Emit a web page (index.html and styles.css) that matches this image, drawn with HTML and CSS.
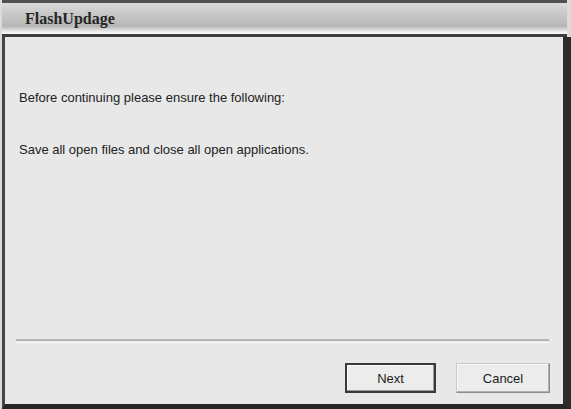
FILE: index.html
```html
<!DOCTYPE html>
<html lang="en">

<head>
  <meta charset="UTF-8">
  <title>FlashUpdage</title>
  <link rel="stylesheet" href="styles.css">
</head>

<body>
  <div class="window">
    <div class="titlebar">
      <span class="titlebar__text">FlashUpdage</span>
    </div>

    <div class="content">
      <div class="content__text">
        <p class="line">Before continuing please ensure the following:</p>
        <p class="line">Save all open files and close all open applications.</p>
      </div>

      <div class="separator"></div>

      <div class="buttons">
        <button class="button button--default">Next</button>
        <button class="button">Cancel</button>
      </div>
    </div>
  </div>
</body>

</html>
```

FILE: styles.css
```css
body {
  margin: 0;
  background-color: #dcdcdc;
  font-family: "Liberation Sans", Arial, sans-serif;
}

.window {
  width: 571px;
  height: 409px;
  box-sizing: border-box;
  display: flex;
  flex-direction: column;
  background-color: #dcdcdc;
}

.titlebar {
  height: 37px;
  box-sizing: border-box;
  border-top: 3px solid #505050;
  border-bottom: 3px solid #3c3c3c;
  margin: 0 4px 0 2px;
  padding-left: 23px;
  display: flex;
  align-items: center;
  background: linear-gradient(#dadada, #c8c8c8 35%, #b6b6b6 75%, #e6e6e6 90%, #fdfdfd);
}

.titlebar__text {
  font-family: "Liberation Serif", "Times New Roman", serif;
  font-size: 16px;
  font-weight: bold;
  color: #262626;
}

.content {
  flex: 1;
  margin-left: 2px;
  border-left: 3px solid #464646;
  border-right: 8px solid #2c2c2c;
  border-bottom: 5px solid #262626;
  background-color: #e8e8e8;
  display: flex;
  flex-direction: column;
}

.content__text {
  flex: 1;
  padding: 53px 0 0 14px;
}

.line {
  margin: 0 0 37px;
  font-size: 13px;
  line-height: 15px;
  color: #222;
}

.separator {
  margin: 0 14px 0 11px;
  height: 1px;
  border-top: 2px solid #b4b4b4;
  border-bottom: 1px solid #fafafa;
}

.buttons {
  display: flex;
  justify-content: flex-end;
  gap: 20px;
  padding: 20px 13px 11px 0;
}

.button {
  width: 94px;
  height: 30px;
  box-sizing: border-box;
  font-family: "Liberation Sans", Arial, sans-serif;
  font-size: 13px;
  color: #1c1c1c;
  background-color: #ececec;
  border: 1px solid #c8c8c8;
  border-right-color: #8c8c8c;
  border-bottom-color: #8c8c8c;
  box-shadow: inset -1px -1px 0 #b0b0b0, inset 1px 1px 0 #fafafa;
}

.button--default {
  width: 91px;
  border: 2px solid #3a3a3a;
  box-shadow: inset -1px -1px 0 #9a9a9a, inset 1px 1px 0 #fafafa;
}
```
